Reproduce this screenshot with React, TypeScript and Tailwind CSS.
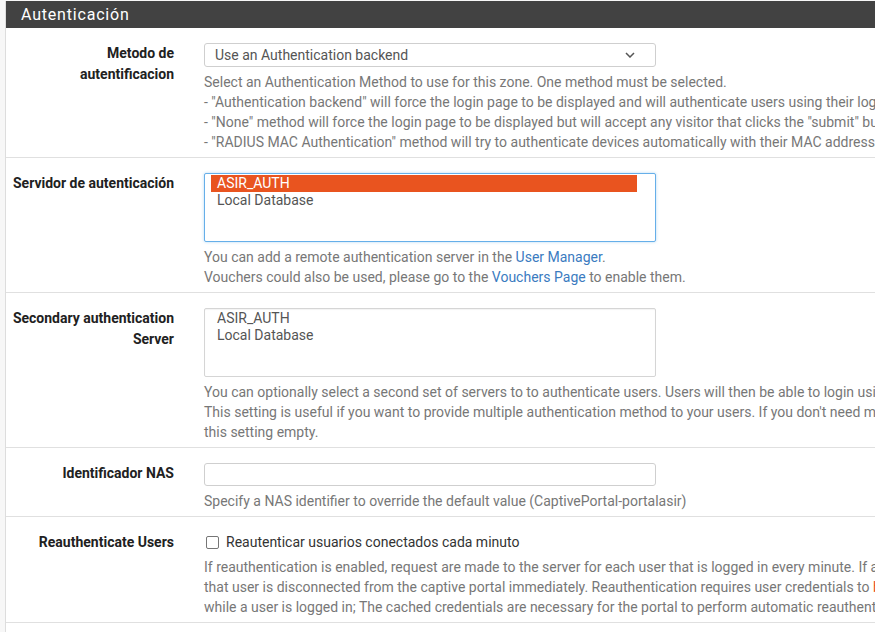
import React from "react";

const font = { fontFamily: "Roboto, 'Noto Sans', Arial, sans-serif" };

function Row({ label, children }: { label: React.ReactNode; children: React.ReactNode }) {
  return (
    <div className="flex border-b border-[#e0e0e0] pt-[15px] pb-[5px]">
      <div className="w-[198px] shrink-0 pl-[5px] pr-[30px] text-right text-[14px] leading-[21px] font-bold text-[#212121]">
        {label}
      </div>
      <div className="flex-1 min-w-0">{children}</div>
    </div>
  );
}

function Help({ lines }: { lines: React.ReactNode[] }) {
  return (
    <div className="mt-[5px] text-[14px] leading-[20px] text-[#777777]">
      {lines.map((l, i) => (
        <div key={i} className="whitespace-nowrap">
          {l}
        </div>
      ))}
    </div>
  );
}

function ListBox({ focused, selected }: { focused?: boolean; selected?: boolean }) {
  return (
    <div
      className={
        "w-[452px] h-[69px] bg-white rounded-[2px] pl-[6px] pr-[18px] pt-[1px] text-[14px] leading-[17px] text-[#555555] " +
        (focused
          ? "border border-[#66afe9] shadow-[0_0_3px_rgba(102,175,233,0.5)]"
          : "border border-[#d5d5d5] shadow-[inset_0_1px_1px_rgba(0,0,0,0.05)]")
      }
    >
      <div className={selected ? "bg-[#e9541f] text-white px-[6px]" : "px-[6px]"}>ASIR_AUTH</div>
      <div className="px-[6px]">Local Database</div>
    </div>
  );
}

export default function App() {
  return (
    <div style={font} className="w-[875px] h-[632px] overflow-hidden bg-[#f7f7f7] pt-[1px]">
      <div className="ml-[5px] border-l border-[#dddddd] bg-white h-full">
        <div className="h-[27px] bg-[#424242] text-white text-[16px] leading-[28px] pl-[15px] tracking-[0.8px]">
          Autenticación
        </div>

        <Row
          label={
            <>
              Metodo de
              <br />
              autentificacion
            </>
          }
        >
          <div className="w-[452px] h-[24px] border border-[#cfcfcf] rounded-[3px] bg-white flex items-center pl-[10px] pr-[22px] text-[14px] text-[#555555] justify-between">
            <span>Use an Authentication backend</span>
            <svg width="10" height="6" viewBox="0 0 10 6" className="mr-[-2px]">
              <path d="M1 1 L5 5 L9 1" fill="none" stroke="#555" strokeWidth="1.5" />
            </svg>
          </div>
          <Help
            lines={[
              "Select an Authentication Method to use for this zone. One method must be selected.",
              '- "Authentication backend" will force the login page to be displayed and will authenticate users using their login and password, or using vouchers.',
              '- "None" method will force the login page to be displayed but will accept any visitor that clicks the "submit" button.',
              '- "RADIUS MAC Authentication" method will try to authenticate devices automatically with their MAC address without displaying any login page.',
            ]}
          />
        </Row>

        <Row label={<span className="whitespace-nowrap">Servidor de autenticación</span>}>
          <ListBox focused selected />
          <Help
            lines={[
              <>
                You can add a remote authentication server in the{" "}
                <span className="text-[#3b7bbf]">User Manager</span>.
              </>,
              <>
                Vouchers could also be used, please go to the{" "}
                <span className="text-[#3b7bbf]">Vouchers Page</span> to enable them.
              </>,
            ]}
          />
        </Row>

        <Row
          label={
            <>
              <span className="whitespace-nowrap">Secondary authentication</span>
              <br />
              Server
            </>
          }
        >
          <ListBox />
          <Help
            lines={[
              "You can optionally select a second set of servers to to authenticate users. Users will then be able to login using separated HTML inputs.",
              "This setting is useful if you want to provide multiple authentication method to your users. If you don't need multiple authentication method, then leave",
              "this setting empty.",
            ]}
          />
        </Row>

        <Row label="Identificador NAS">
          <div className="w-[452px] h-[23px] border border-[#cfcfcf] rounded-[3px] bg-white" />
          <Help lines={["Specify a NAS identifier to override the default value (CaptivePortal-portalasir)"]} />
        </Row>

        <Row label="Reauthenticate Users">
          <div className="flex items-center h-[20px] text-[14px] text-[#333333]">
            <span className="inline-block w-[13px] h-[13px] border border-[#767676] rounded-[2px] bg-white ml-[2px] mr-[7px]" />
            Reautenticar usuarios conectados cada minuto
          </div>
          <Help
            lines={[
              "If reauthentication is enabled, request are made to the server for each user that is logged in every minute. If an access denied is received for a user,",
              <>
                that user is disconnected from the captive portal immediately. Reauthentication requires user credentials to{" "}
                <span className="text-[#e9541f]">be cached in the captive portal database</span>
              </>,
              "while a user is logged in; The cached credentials are necessary for the portal to perform automatic reauthentication requests.",
            ]}
          />
        </Row>
      </div>
    </div>
  );
}
